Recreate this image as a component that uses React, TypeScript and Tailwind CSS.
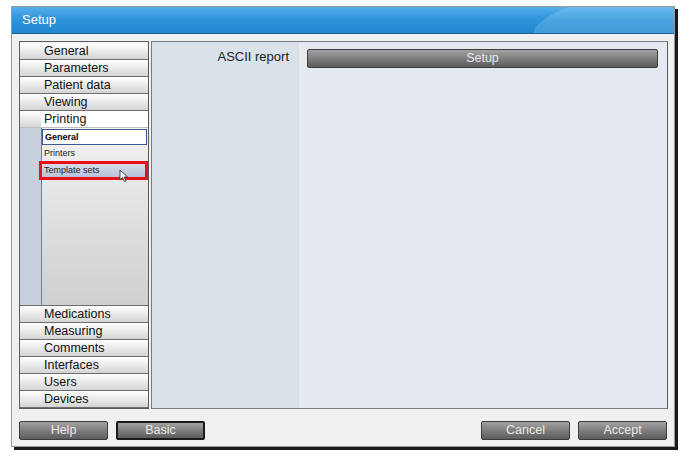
import React from 'react';

const topItems = ['General', 'Parameters', 'Patient data', 'Viewing'];
const bottomItems = ['Medications', 'Measuring', 'Comments', 'Interfaces', 'Users', 'Devices'];

function NavItem({ label }: { label: string }) {
  return (
    <div className="h-[17px] border-b border-[#6e6e6e] bg-[linear-gradient(180deg,#ffffff,#e6e6e6_60%,#d4d4d4)] pl-[24px] text-[12.5px] leading-[16px] text-[#111]">
      {label}
    </div>
  );
}

function GrayButton({ label, dark }: { label: string; dark?: boolean }) {
  return (
    <button
      className={`h-[19px] w-[89px] rounded-[2px] bg-[linear-gradient(180deg,#a2a2a2,#7a7a7a_55%,#5c5c5c)] text-[12.5px] leading-[15px] text-[#e8e8e8] ${
        dark ? 'border-2 border-[#1a1a1a]' : 'border border-[#3c3c3c]'
      }`}
    >
      {label}
    </button>
  );
}

function Cursor() {
  return (
    <svg width="11" height="14" viewBox="0 0 11 14" className="absolute left-[77px] top-[5px]">
      <path d="M1 1 L1 11 L3.5 8.6 L5.4 12.6 L7 11.9 L5.2 8 L8.6 8 Z" fill="#fff" stroke="#333" strokeWidth="0.9" strokeLinejoin="round" />
    </svg>
  );
}

export default function App() {
  return (
    <div className="h-[467px] w-[693px] overflow-hidden bg-white pl-[11px] pt-[6px] font-['Liberation_Sans',Arial,sans-serif]">
      <div className="flex h-[441px] w-[664px] flex-col border border-[#9a9a9a] bg-[#f0f0f0] shadow-[3px_3px_0_#1a1a1a]">
        {/* title bar */}
        <div className="relative h-[27px] overflow-hidden border-b border-[#1d5f8f] bg-[linear-gradient(180deg,#55b0ec,#2d93da_50%,#1f86d0)]">
          <div className="absolute -top-[30px] left-[520px] h-[60px] w-[300px] rotate-[-10deg] rounded-[50%] bg-[#a8d8f8] opacity-25" />
          <span className="relative ml-[10px] text-[13px] leading-[26px] text-white">Setup</span>
        </div>

        {/* body */}
        <div className="flex h-[375px] gap-[2px] pl-[7px] pr-[6px] pt-[7px]">
          {/* nav */}
          <div className="flex w-[130px] flex-col border border-[#5c5c5c] bg-[#f0f0f0]">
            <div className="h-[1px]" />
            {topItems.map((l) => (
              <NavItem key={l} label={l} />
            ))}
            <div className="flex h-[17px] border-b border-[#c0c0c0]">
              <div className="w-[21px] bg-[linear-gradient(180deg,#ffffff,#d8d8d8)]" />
              <div className="flex-1 bg-white pl-[3px] text-[12.5px] leading-[16px] text-[#111]">Printing</div>
            </div>
            <div className="flex flex-1">
              <div className="w-[21px] bg-[#c8d0dc]" />
              <div className="relative flex-1 border-l border-[#4f86b8] bg-[linear-gradient(180deg,#f4f4f4,#e4e4e4_40%,#cfcfcf)] pt-[1px]">
                <div className="mr-[1px] h-[16px] border border-[#3b5b8c] bg-white pl-[2px] text-[9px] font-bold leading-[14px] text-black">
                  General
                </div>
                <div className="h-[16px] pl-[2px] text-[9px] leading-[16px] text-[#222]">Printers</div>
                <div className="relative -ml-[3px] h-[19px] border-[3px] border-[#e8101a] bg-[linear-gradient(180deg,#d6dcea,#b8c2d8)] pl-[2px] text-[9px] leading-[13px] text-[#222]">
                  Template sets
                  <Cursor />
                </div>
              </div>
            </div>
            <div className="border-t border-[#6e6e6e]">
              {bottomItems.map((l) => (
                <NavItem key={l} label={l} />
              ))}
            </div>
          </div>

          {/* content */}
          <div className="flex flex-1 border border-[#7a7a7a] border-r-[#5a5a5a]">
            <div className="w-[147px] bg-[#d9e1e9] pr-[10px] pt-[5px] text-right text-[13px] text-[#222]">ASCII report</div>
            <div className="flex-1 bg-[linear-gradient(90deg,#e6ebf0,#e4e9f2_12px)] pl-[8px] pr-[9px] pt-[3px]">
              <button className="h-[19px] w-full rounded-[2px] border border-[#3c3c3c] bg-[linear-gradient(180deg,#a2a2a2,#7a7a7a_55%,#5c5c5c)] text-[12.5px] leading-[15px] text-[#e8e8e8]">
                Setup
              </button>
            </div>
          </div>
        </div>

        {/* footer */}
        <div className="flex items-start gap-[8px] pl-[7px] pr-[7px] pt-[12px]">
          <GrayButton label="Help" />
          <GrayButton label="Basic" dark />
          <div className="flex-1" />
          <GrayButton label="Cancel" />
          <GrayButton label="Accept" />
        </div>
      </div>
    </div>
  );
}
